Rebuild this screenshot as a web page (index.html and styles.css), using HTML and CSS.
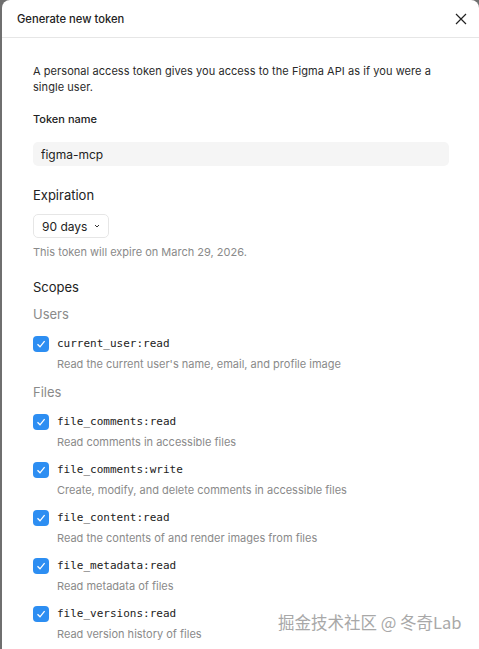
FILE: index.html
```html
<!DOCTYPE html>
<html lang="en">
<head>
    <meta charset="UTF-8">
    <meta name="viewport" content="width=device-width, initial-scale=1.0">
    <title>Generate new token</title>
    <link rel="stylesheet" href="styles.css">
</head>
<body>
    <div class="modal">
        <div class="modal-header">
            <span class="modal-title">Generate new token</span>
            <button type="button" class="close-btn" aria-label="Close">
                <svg width="12" height="12" viewBox="0 0 12 12"><path d="M1 1L11 11M11 1L1 11" stroke="#222" stroke-width="1.2" fill="none"/></svg>
            </button>
        </div>
        <div class="modal-body">
            <p class="intro">A personal access token gives you access to the Figma API as if you were a single user.</p>

            <label class="field-label" for="token-name">Token name</label>
            <input id="token-name" class="text-input" type="text" value="figma-mcp">

            <h2 class="section-title">Expiration</h2>
            <button type="button" class="select">
                90 days
                <svg width="8" height="8" viewBox="0 0 8 8"><path d="M2 3L4 5L6 3" stroke="#333" stroke-width="1" fill="none"/></svg>
            </button>
            <p class="hint">This token will expire on March 29, 2026.</p>

            <h2 class="section-title scopes-title">Scopes</h2>

            <h3 class="group-title">Users</h3>
            <div class="scope">
                <span class="check"><svg width="16" height="16" viewBox="0 0 16 16"><path d="M4.5 8.2L7 10.8L11.6 5.2" stroke="#fff" stroke-width="1.3" fill="none"/></svg></span>
                <div>
                    <code class="scope-name">current_user:read</code>
                    <p class="scope-desc">Read the current user's name, email, and profile image</p>
                </div>
            </div>

            <h3 class="group-title">Files</h3>
            <div class="scope">
                <span class="check"><svg width="16" height="16" viewBox="0 0 16 16"><path d="M4.5 8.2L7 10.8L11.6 5.2" stroke="#fff" stroke-width="1.3" fill="none"/></svg></span>
                <div>
                    <code class="scope-name">file_comments:read</code>
                    <p class="scope-desc">Read comments in accessible files</p>
                </div>
            </div>
            <div class="scope">
                <span class="check"><svg width="16" height="16" viewBox="0 0 16 16"><path d="M4.5 8.2L7 10.8L11.6 5.2" stroke="#fff" stroke-width="1.3" fill="none"/></svg></span>
                <div>
                    <code class="scope-name">file_comments:write</code>
                    <p class="scope-desc">Create, modify, and delete comments in accessible files</p>
                </div>
            </div>
            <div class="scope">
                <span class="check"><svg width="16" height="16" viewBox="0 0 16 16"><path d="M4.5 8.2L7 10.8L11.6 5.2" stroke="#fff" stroke-width="1.3" fill="none"/></svg></span>
                <div>
                    <code class="scope-name">file_content:read</code>
                    <p class="scope-desc">Read the contents of and render images from files</p>
                </div>
            </div>
            <div class="scope">
                <span class="check"><svg width="16" height="16" viewBox="0 0 16 16"><path d="M4.5 8.2L7 10.8L11.6 5.2" stroke="#fff" stroke-width="1.3" fill="none"/></svg></span>
                <div>
                    <code class="scope-name">file_metadata:read</code>
                    <p class="scope-desc">Read metadata of files</p>
                </div>
            </div>
            <div class="scope">
                <span class="check"><svg width="16" height="16" viewBox="0 0 16 16"><path d="M4.5 8.2L7 10.8L11.6 5.2" stroke="#fff" stroke-width="1.3" fill="none"/></svg></span>
                <div>
                    <code class="scope-name">file_versions:read</code>
                    <p class="scope-desc">Read version history of files</p>
                </div>
            </div>
        </div>
        <div class="watermark">掘金技术社区 @ 冬奇Lab</div>
    </div>
</body>
</html>
```

FILE: styles.css
```css
body {
    margin: 0;
    background-color: #6f6f6f;
    font-family: Inter, "Noto Sans", sans-serif;
    color: #222;
    overflow: hidden;
}
.modal {
    position: relative;
    margin-left: 2px;
    height: 649px;
    overflow: hidden;
    background: #fff;
    border-radius: 8px 8px 0 0;
}
.modal-header {
    display: flex;
    align-items: center;
    justify-content: space-between;
    height: 38px;
    padding: 0 10px 0 15px;
    border-bottom: 1px solid #e6e6e6;
    box-sizing: border-box;
}
.modal-title {
    font-size: 11.2px;
    font-weight: 500;
}
.close-btn {
    border: none;
    background: none;
    padding: 0;
    width: 16px;
    height: 16px;
    display: flex;
    align-items: center;
    justify-content: center;
    cursor: pointer;
}
.modal-body {
    padding: 25px 30px 0 31px;
}
.intro {
    margin: 0;
    font-size: 11px;
    letter-spacing: 0.06px;
    line-height: 16px;
    color: #2a2a2a;
}
.field-label {
    display: block;
    margin-top: 16px;
    font-size: 11px;
    font-weight: 500;
    line-height: 16px;
}
.text-input {
    display: block;
    width: 100%;
    box-sizing: border-box;
    margin-top: 15px;
    height: 24px;
    padding: 0 8px;
    border: none;
    border-radius: 5px;
    background: #f5f5f5;
    font-family: inherit;
    font-size: 12px;
    color: #222;
}
.section-title {
    margin: 21px 0 0;
    font-size: 13px;
    font-weight: 400;
    line-height: 16px;
}
.scopes-title {
    margin-top: 20px;
}
.select {
    display: flex;
    align-items: center;
    gap: 6px;
    margin-top: 11px;
    height: 24px;
    padding: 0 7px 0 8px;
    border: 1px solid #e6e6e6;
    border-radius: 5px;
    background: #fff;
    font-family: inherit;
    font-size: 12px;
    color: #222;
}
.hint {
    margin: 7px 0 0;
    font-size: 11px;
    line-height: 14px;
    color: #8a8a8a;
}
.group-title {
    margin: 13px 0 0;
    font-size: 13px;
    font-weight: 400;
    line-height: 16px;
    color: #8a8a8a;
}
.scopes-title + .group-title {
    margin-top: 11px;
}
.scope {
    display: flex;
    gap: 8px;
    margin-top: 13px;
}
.group-title + .scope {
    margin-top: 14px;
}
.check {
    flex: none;
    width: 16px;
    height: 16px;
    border-radius: 4px;
    background: #2d8ef2;
}
.check svg {
    display: block;
}
.scope-name {
    display: block;
    font-family: "DejaVu Sans Mono", "Liberation Mono", monospace;
    font-size: 11px;
    line-height: 16px;
    color: #222;
}
.scope-desc {
    margin: 5px 0 0;
    font-size: 11px;
    line-height: 14px;
    color: #8a8a8a;
}
.watermark {
    position: absolute;
    left: 276px;
    top: 611px;
    font-family: "Noto Sans CJK SC", sans-serif;
    font-size: 16.5px;
    line-height: 22px;
    color: #a8a8a8;
    text-shadow: 0 0 1px #fff, 0 0 2px #fff;
}
```
